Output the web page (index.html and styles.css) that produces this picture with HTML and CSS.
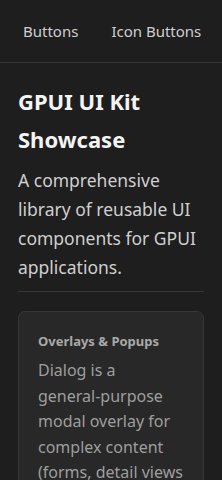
FILE: index.html
```html
<!DOCTYPE html>
<html>
<head>
<meta charset="UTF-8">
<title>GPUI UI Kit</title>
<link rel="stylesheet" href="styles.css">
</head>
<body>
<div class="tabs">
	<span class="tab">Buttons</span>
	<span class="tab">Icon Buttons</span>
</div>
<div class="content">
	<h1 class="title">GPUI UI Kit Showcase</h1>
	<p class="lead">A comprehensive library of reusable UI components for GPUI applications.</p>
	<div class="divider"></div>
	<div class="card">
		<h3 class="card-title">Overlays &amp; Popups</h3>
		<p class="card-text">Dialog is a general&#8209;purpose modal overlay for complex content (forms, detail views and more).</p>
	</div>
</div>
</body>
</html>
```

FILE: styles.css
```css
html, body{
	margin:0;
	padding:0;
	background:#1e1e1e;
	height:100%;
	overflow:hidden;
}
body{
	font-family:"Noto Sans", "Open Sans", sans-serif;
	color:#e6e6e6;
}
.tabs{
	display:flex;
	gap:33px;
	height:62px;
	align-items:center;
	padding:0 0 0 23px;
	border-bottom:1px solid #353535;
	white-space:nowrap;
}
.tab{
	font-size:15px;
	color:#cfcfcf;
}
.content{
	padding:0 18px;
}
.title{
	margin:19px 0 0 0;
	font-size:22px;
	line-height:38px;
	font-weight:bold;
	color:#f4f4f4;
}
.lead{
	margin:8px 0 0 0;
	font-size:17.5px;
	line-height:29px;
	color:#cfcfcf;
}
.divider{
	height:1px;
	background:#353535;
	margin-top:9px;
}
.card{
	margin-top:19px;
	background:#282828;
	border:1px solid #353535;
	border-radius:7px;
	padding:20px 15px 20px 19px;
}
.card-title{
	margin:0;
	font-size:13px;
	font-weight:bold;
	color:#a8a8a8;
}
.card-text{
	margin:8px 0 0 0;
	font-size:16px;
	line-height:25.5px;
	color:#9e9e9e;
}
```
